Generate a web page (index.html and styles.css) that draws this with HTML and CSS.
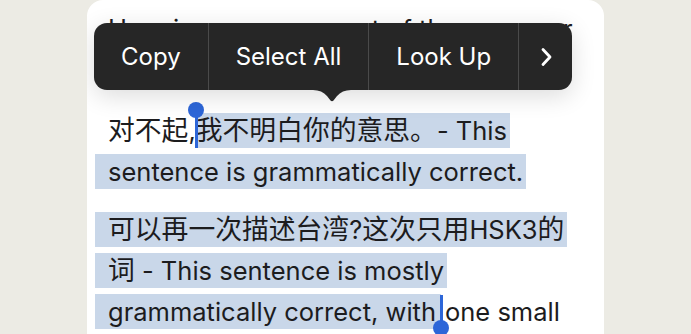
FILE: index.html
```html
<!DOCTYPE html>
<html lang="zh">
<head>
<meta charset="utf-8">
<title>Selection</title>
<link rel="stylesheet" href="styles.css">
</head>
<body>
<div class="card">
  <div class="para first">
    <div class="line">Here is an assessment of the grammar</div>
  </div>
  <div class="para">
    <div class="line"><span class="zh">对不起</span>,<span class="caret start"><span class="bar"></span><span class="knob"></span></span><span class="sel tight"><span class="zh">我不明白你的意思。</span>- This</span></div>
    <div class="line"><span class="sel">sentence is grammatically correct.</span></div>
  </div>
  <div class="para">
    <div class="line"><span class="sel"><span class="zh">可以再一次描述台湾</span>?<span class="zh">这次只用</span>HSK3<span class="zh">的</span></span></div>
    <div class="line"><span class="sel"><span class="zh">词</span> - This sentence is mostly</span></div>
    <div class="line"><span class="sel end-sel">grammatically correct, with</span><span class="caret end"><span class="bar"></span><span class="knob"></span></span><span class="after">one small</span></div>
  </div>

  <div class="menu">
    <div class="item">Copy</div>
    <div class="item">Select All</div>
    <div class="item">Look Up</div>
    <div class="item more">
      <svg width="14" height="20" viewBox="0 0 14 20"><path d="M4 2.5 L11 10 L4 17.5" fill="none" stroke="#fff" stroke-width="2.8" stroke-linecap="round" stroke-linejoin="round"/></svg>
    </div>
    <svg class="tip" width="38" height="12" viewBox="0 0 38 12"><path d="M0 0 Q9 0 14 6 L17.5 10.5 Q19 12 20.5 10.5 L24 6 Q29 0 38 0 Z" fill="#262626"/></svg>
  </div>
</div>
</body>
</html>
```

FILE: styles.css
```css
html, body {
  margin: 0;
  padding: 0;
}
body {
  background: #ecebe4;
  font-family: "Inter", "Noto Sans CJK SC", sans-serif;
  height: 334px;
  overflow: hidden;
}
.card {
  position: relative;
  margin-left: 87px;
  width: 517px;
  height: 334px;
  background: #ffffff;
  border-radius: 16px 16px 0 0;
  padding: 8px 0 0 21px;
  box-sizing: border-box;
  color: #1c1c1e;
  font-size: 25.5px;
  overflow: hidden;
}
.zh {
  font-size: 26.8px;
}
.para {
  margin-bottom: 17px;
}
.para.first {
  margin-bottom: 61px;
}
.line {
  height: 41px;
  line-height: 41px;
  white-space: nowrap;
}
.sel {
  background: #c9d7e9;
  padding: 2px 3px 2px 13px;
  margin-left: -13px;
}
.sel.tight {
  padding-left: 0;
  margin-left: 0;
}
.sel.end-sel {
  padding-right: 5px;
}
.after {
  margin-left: 4px;
}
.caret {
  position: relative;
  display: inline-block;
  width: 0;
  height: 41px;
  vertical-align: top;
}
.bar {
  position: absolute;
  left: -1px;
  width: 3px;
  background: #2d66d8;
}
.knob {
  position: absolute;
  width: 16px;
  height: 16px;
  left: -8px;
  border-radius: 50%;
  background: #2d66d8;
}
.caret.start .bar { top: 0px; height: 38px; }
.caret.start .knob { top: -8px; }
.caret.end .bar { top: 4px; height: 30px; }
.caret.end .knob { top: 29px; }

.menu {
  position: absolute;
  left: 7px;
  top: 23px;
  height: 67px;
  display: flex;
  background: #262626;
  border-radius: 13px;
  box-shadow: 0 6px 24px rgba(0, 0, 0, 0.14);
  color: #ffffff;
  font-size: 24px;
}
.item {
  display: flex;
  align-items: center;
  padding: 0 27px;
  border-right: 1px solid #4a4a4a;
}
.item.more {
  border-right: none;
  width: 53px;
  padding: 0;
  justify-content: center;
  box-sizing: border-box;
}
.item.more svg { display: block; }
.tip {
  position: absolute;
  left: 219px;
  top: 67px;
  display: block;
}
```
